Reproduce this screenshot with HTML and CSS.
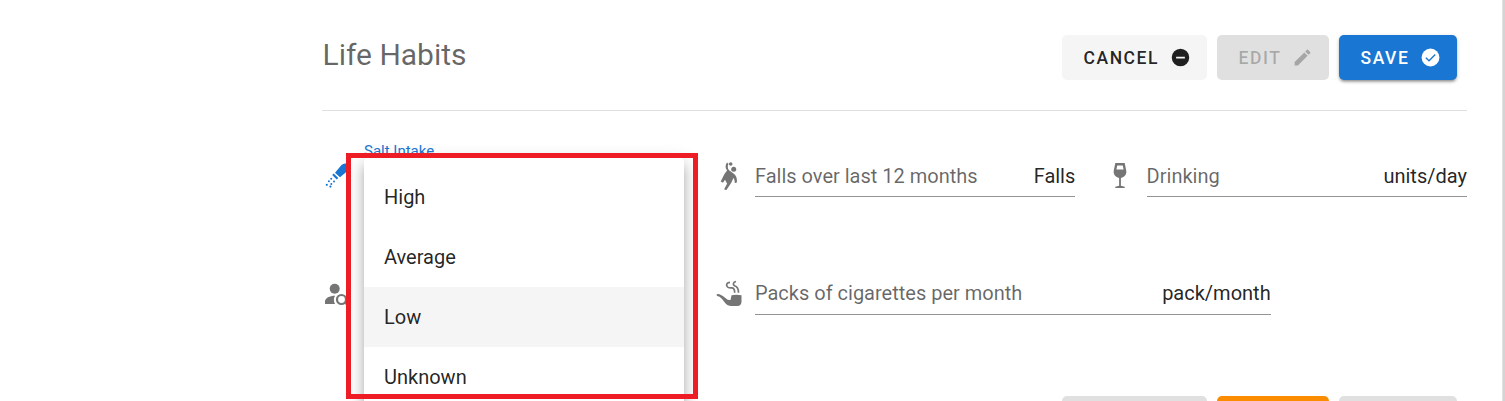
FILE: index.html
```html
<!DOCTYPE html>
<html lang="en">
<head>
<meta charset="utf-8">
<title>Life Habits</title>
<link rel="stylesheet" href="styles.css">
</head>
<body>
<main class="panel">
  <header class="header">
    <h1 class="title">Life Habits</h1>
    <div class="actions">
      <button class="btn cancel"><span>CANCEL</span><svg class="btn-icon" viewBox="0 0 24 24"><path d="M17 13H7v-2h10m-5-9A10 10 0 0 0 2 12a10 10 0 0 0 10 10 10 10 0 0 0 10-10A10 10 0 0 0 12 2z"/></svg></button>
      <button class="btn edit"><span>EDIT</span><svg class="btn-icon" viewBox="0 0 24 24"><path d="M20.71 7.04c.39-.39.39-1.04 0-1.41l-2.34-2.34c-.37-.39-1.02-.39-1.41 0l-1.84 1.83 3.75 3.75M3 17.25V21h3.75L17.81 9.93l-3.75-3.75L3 17.25z"/></svg></button>
      <button class="btn save"><span>SAVE</span><svg class="btn-icon" viewBox="0 0 24 24"><circle cx="12" cy="12" r="10.200"/><path class="check" d="M6.700 12.200l3.600 3.600 7.200-7.300"/></svg></button>
    </div>
  </header>

  <section class="row">
    <div class="field active">
      <svg class="icon" viewBox="0 0 30 30"><path d="M13 12.800L19.500 5Q21.500 3 24 3.500Q27.500 4.500 27.500 8Q27 10 25.500 11L18 17.300zM11.700 13.600l4.600 4.500-1.600 1.300-4.500-4.300z"/><circle cx="9.200" cy="18.700" r="1"/><circle cx="12" cy="21.600" r="1"/><circle cx="6.900" cy="21.300" r="1"/><circle cx="9.300" cy="23.900" r="1"/><circle cx="4.800" cy="24.800" r="1.100"/><circle cx="8.400" cy="26.600" r="1.100"/></svg>
      <div class="control"><span class="float-label">Salt Intake</span></div>
    </div>
    <div class="field">
      <svg class="icon" viewBox="0 0 30 30"><circle cx="19.700" cy="9.300" r="2.500"/><circle cx="16.700" cy="4" r="1.800"/><path d="M13 2.500l1.500 1.200c-1 2.200-1 4.300.3 6.300l4.700 3.500c2.600 1.600 4 5.300 3.200 9.300l-2 .2c.1-2.200-.3-3.800-1.300-5l-2.100 4.800-5 7.400-2.200-1 3-5.400-2.100-4.100-2 3-2.300-1.200 3.900-7.700 2.500-3.300c-2-2.500-2-5.500-.1-8z"/></svg>
      <div class="control"><span class="label">Falls over last 12 months</span><span class="suffix">Falls</span></div>
    </div>
    <div class="field">
      <svg class="icon" viewBox="0 0 30 30"><path fill-rule="evenodd" d="M10.300 3h9.400l1.600 8c.4 3.500-1.800 6-5.400 6.900v7.800l3.800 1.100v1.200h-9.400v-1.200l3.800-1.100v-7.800c-3.600-.9-5.800-3.400-5.400-6.900zM12.300 5.600l-.9 4h7.200l-.9-4z"/></svg>
      <div class="control"><span class="label">Drinking</span><span class="suffix">units/day</span></div>
    </div>
  </section>

  <section class="row second">
    <div class="field">
      <svg class="icon" viewBox="0 0 30 30"><circle cx="12.700" cy="9.700" r="5"/><path d="M3 25v-2.500c0-3.400 4.500-5.700 10-5.700-1.500 2.500-1.400 5.700 0 8.200z"/><circle class="ring" cx="19.500" cy="20.500" r="4.500"/><path d="M22.500 24.500l1.400-1.400 4 4-1.400 1.400z"/></svg>
      <div class="control"></div>
    </div>
    <div class="field wide">
      <svg class="icon" viewBox="0 0 30 30"><path d="M2.500 15.500Q3.300 14.500 5.500 15.200Q9 16.500 12 19.500Q14 21.500 16.500 21L17.500 16.300Q22 15.200 27.500 16.300V23Q27 27 23.500 27H17.500Q13 27 10 22.500Q7 18 4 17.300Q2.500 17 2.500 15.500z"/><path class="smoke" d="M16 3.300c-3 0-4.200 2.300-2.800 4.300 1 1.500 2.500 1.200 4.500 1.200 2 0 3 2 3 5M22 2.500c-3 .4-3.300 3.200-1.500 4.200 2.800.8 4 2.900 4 7"/></svg>
      <div class="control"><span class="label">Packs of cigarettes per month</span><span class="suffix">pack/month</span></div>
    </div>
  </section>

  <footer class="footer"><i class="stub first"></i><i class="stub orange"></i><i class="stub"></i></footer>
</main>

<div class="menu-layer">
  <ul class="menu"><li>High</li><li>Average</li><li class="selected">Low</li><li>Unknown</li></ul>
</div>
<div class="highlight"></div>
</body>
</html>
```
FILE: styles.css
```css
* { box-sizing: border-box; }
html, body { margin: 0; height: 401px; overflow: hidden; background: #fff; }
body { position: relative; font-family: Roboto, "Liberation Sans", sans-serif; color: rgba(0,0,0,.87); }
.panel { width: 1505px; height: 401px; padding: 0 36px 0 322px; border-right: 2px solid #d4d4d4; box-shadow: inset -1px 0 #e2e2e2; display: flex; flex-direction: column; }
.header { height: 111px; flex: none; padding: 35px 10px 0 0; border-bottom: 1px solid #e0e0e0; display: flex; justify-content: space-between; align-items: flex-start; }
.title { margin: 0; padding-left: .5px; font-size: 30px; line-height: 40px; font-weight: 400; color: rgba(0,0,0,.6); }
.actions { display: flex; gap: 10px; }
.btn { height: 45px; border: 0; border-radius: 5px; padding: 0 16px 0 21.5px; display: flex; align-items: center; justify-content: space-between; font: 500 17.5px Roboto, sans-serif; letter-spacing: 1.56px; color: rgba(0,0,0,.87); }
.btn-icon { width: 21px; height: 21px; fill: currentColor; }
.check { fill: none; stroke: #1976d2; stroke-width: 1.5; }
.cancel { width: 145px; background: #f5f5f5; }
.edit { width: 112px; background: #e0e0e0; color: rgba(0,0,0,.26); }
.save { width: 118px; background: #1976d2; color: #fff; box-shadow: 0 3px 3px -2px rgba(0,0,0,.3), 0 2px 3px rgba(0,0,0,.16), 0 1px 5px rgba(0,0,0,.12); }
.row { flex: none; display: flex; gap: 30px; height: 86px; padding-top: 46px; }
.row.second { height: 118px; padding-top: 78px; }
.field { width: 361.67px; display: flex; gap: 11.3px; }
.field.wide { width: 557px; }
.icon { flex: none; width: 30px; height: 30px; margin-top: 3px; fill: #757575; }
.second .icon { margin-top: 4px; }
.ring, .smoke { fill: none; stroke: #757575; stroke-width: 2.2; }
.smoke { stroke-width: 1.7; }
.control { flex: 1; height: 40px; border-bottom: 1px solid #949494; display: flex; justify-content: space-between; font-size: 20px; line-height: 38px; white-space: nowrap; }
.second .control { line-height: 37px; }
.field:first-child .control { border-color: transparent; }
.label { color: rgba(0,0,0,.6); }
.active .icon { fill: #1976d2; }
.float-label { padding-left: .7px; font-size: 15px; line-height: 18px; margin-top: -15px; color: #1976d2; }
.footer { margin-top: auto; height: 5px; padding-right: 10px; display: flex; justify-content: flex-end; gap: 10px; overflow: hidden; }
.stub { height: 45px; width: 118px; border-radius: 5px; background: #e0e0e0; }
.stub.first { width: 145px; }
.stub.orange { width: 112px; background: #fb8c00; }
.menu-layer { position: absolute; left: 324px; top: 130px; width: 400px; height: 271px; overflow: hidden; }
.menu { list-style: none; margin: 27px 0 0 40px; padding: 10px 0; width: 320px; background: #fff; border-radius: 5px; box-shadow: 0 6px 6px -4px rgba(0,0,0,.2), 0 10px 12px 1px rgba(0,0,0,.16), 0 4px 17px 2px rgba(0,0,0,.14); }
.menu li { height: 60px; padding: 0 20px; font-size: 20px; line-height: 60px; }
.menu .selected { background: #f5f5f5; }
.highlight { position: absolute; left: 346px; top: 153px; width: 352px; height: 246px; border: 5px solid #ee1c24; }
```
